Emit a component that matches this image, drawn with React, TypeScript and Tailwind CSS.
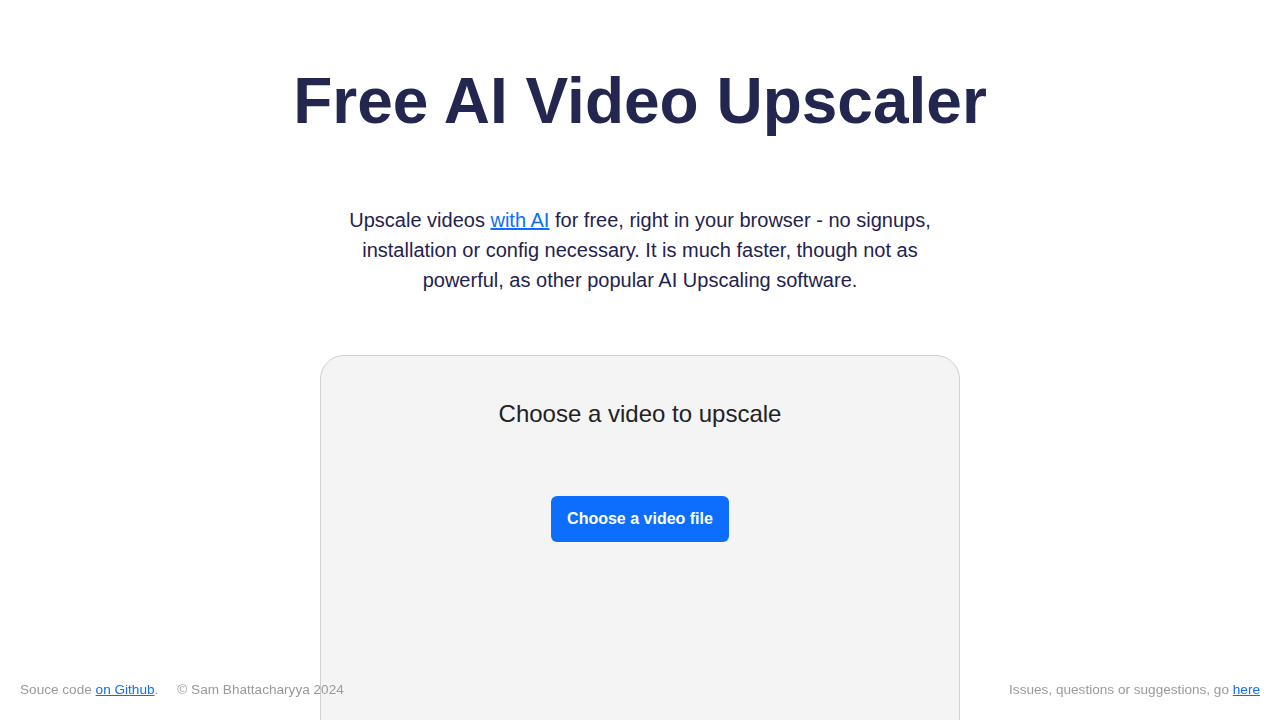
import React from "react";

export default function App() {
  return (
    <div
      className="min-h-screen bg-white"
      style={{ fontFamily: '"Liberation Sans", Arial, sans-serif' }}
    >
      <main className="flex flex-col items-center pt-[64px]">
        <h1 className="text-[64px] leading-[74px] font-bold text-[#23264f] text-center">
          Free AI Video Upscaler
        </h1>
        <p className="mt-[67px] w-[600px] text-center text-[20px] leading-[30px] text-[#1f2250]">
          Upscale videos{" "}
          <a href="#" className="text-[#0d6efd] underline">
            with AI
          </a>{" "}
          for free, right in your browser - no signups, installation or config
          necessary. It is much faster, though not as powerful, as other popular
          AI Upscaling software.
        </p>
        <div className="mt-[60px] w-[640px] h-[400px] rounded-[24px] border border-[#cfcfd6] bg-[#f4f4f4] flex flex-col items-center pt-[44px]">
          <h2 className="text-[24px] leading-[28px] text-[#222222]">
            Choose a video to upscale
          </h2>
          <button className="mt-[68px] h-[46px] px-[16px] rounded-[6px] bg-[#0d6efd] text-white text-[16px] font-bold">
            Choose a video file
          </button>
        </div>
      </main>
      <footer className="fixed bottom-0 left-0 right-0 h-[62px] flex items-start justify-between px-[20px] pt-[24px] text-[13.6px] leading-[16px] text-[#9a9a9a]">
        <div className="flex gap-[19px]">
          <span>
            Souce code{" "}
            <a href="#" className="text-[#0d6efd] underline">
              on Github
            </a>
            .
          </span>
          <span>© Sam Bhattacharyya 2024</span>
        </div>
        <div>
          Issues, questions or suggestions, go{" "}
          <a href="#" className="text-[#0d6efd] underline">
            here
          </a>
        </div>
      </footer>
    </div>
  );
}
